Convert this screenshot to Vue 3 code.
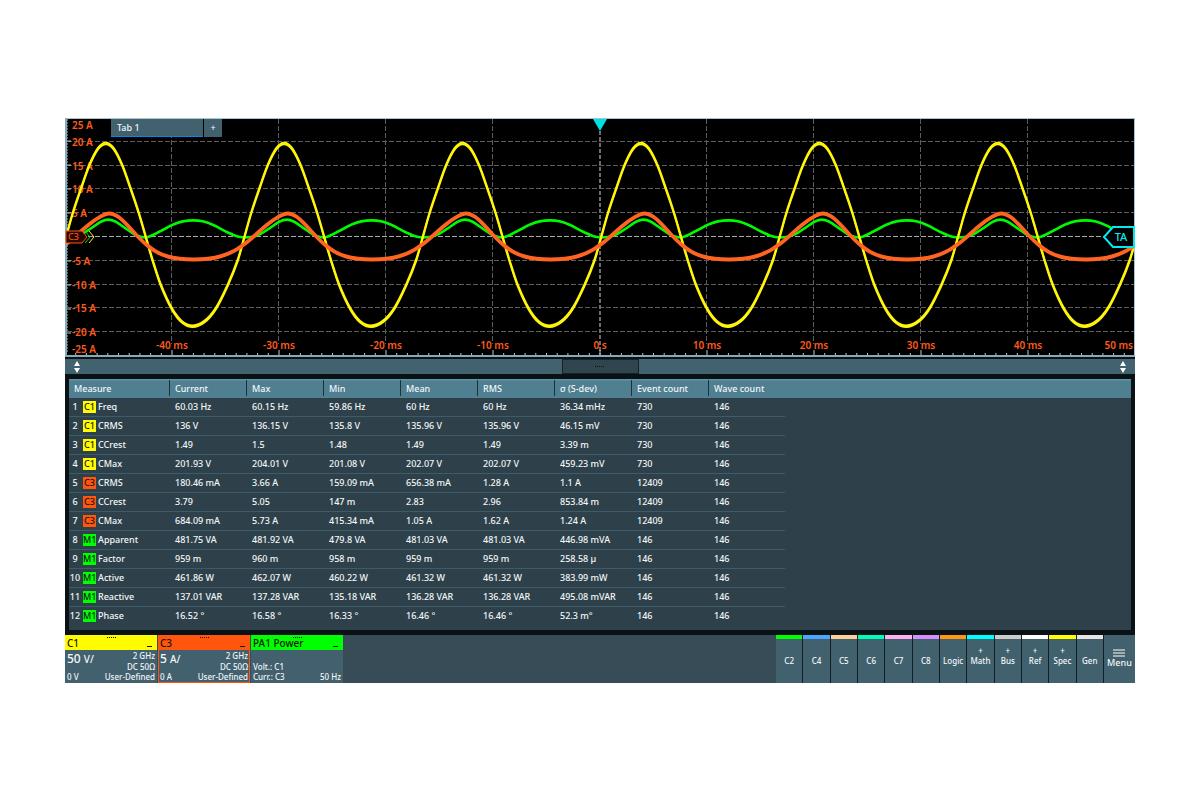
<script setup>
const WIDTH = 1070
const CENTER_X = 535
const CENTER_Y = 119
const PERIOD = 178.4
const DIV_X = 107
const DIV_Y = 23.8

// One cycle of each signal: [offset from the voltage peak, height above zero]
const voltage = [[0, 93.5], [8, 88.2], [16.5, 71.6], [25, 47.8], [33, 24], [40, 0], [47, -24], [55, -48], [66, -71.6], [76, -84.7], [87, -89.3], [98.5, -84.7], [110, -71.6], [122, -48], [132, -23], [138.6, 0], [145.4, 24], [153.4, 47.8], [161.9, 71.6], [170.4, 88.2]]
const current = [[3.5, 23.5], [12.4, 20.2], [22, 11.4], [31.5, 1], [41, -8], [51, -15], [62, -19.5], [74, -21.8], [88, -22.6], [102, -21.8], [115, -19.3], [129, -13.5], [140, -6], [149, 1.5], [161, 12], [172.8, 20.2]]
const power = [[2.5, 17.4], [10, 15.3], [19, 9.2], [28, 3], [35, 0.2], [42, 0], [54, 5.5], [67.5, 12.5], [77, 15.6], [87.5, 16.6], [98, 15.4], [108, 11.8], [121, 5], [133, 0.3], [145, 0], [155, 3.2], [164.4, 9.2], [173.4, 15.3]]

function wave(shape) {
  const pts = []
  for (let c = -4; c < 4; c++) {
    for (const [x, v] of shape) pts.push([CENTER_X + 41 + c * PERIOD + x, CENTER_Y - v])
  }
  let d = `M${pts[1][0].toFixed(1)} ${pts[1][1].toFixed(1)}`
  for (let i = 1; i < pts.length - 2; i++) {
    const [a, b, c, e] = [pts[i - 1], pts[i], pts[i + 1], pts[i + 2]]
    const h = c[0] - b[0]
    const s1 = (c[1] - a[1]) / (c[0] - a[0])
    const s2 = (e[1] - b[1]) / (e[0] - b[0])
    d += `C${[b[0] + h / 3, b[1] + (s1 * h) / 3, c[0] - h / 3, c[1] - (s2 * h) / 3, c[0], c[1]].map((n) => n.toFixed(1)).join(' ')}`
  }
  return d
}

// Each trace is drawn twice with a vertical spread, so flat parts glow thicker than slopes
const traces = [
  { name: 'power', spread: 0.3, d: wave(power) },
  { name: 'voltage', spread: 0.8, d: wave(voltage) },
  { name: 'current', spread: 0.5, d: wave(current) },
]

const rows = [-4, -3, -2, -1, 1, 2, 3, 4].map((n) => Math.round(CENTER_Y + n * DIV_Y))
const cols = [-4, -3, -2, -1, 1, 2, 3, 4].map((n) => CENTER_X + n * DIV_X)
const amps = [25, 20, 15, 10, 5, -5, -10, -15, -20, -25].map((v) => ({
  text: `${v} A`,
  x: 7,
  y: v === 25 ? 11 : v === -25 ? 235 : Math.round(CENTER_Y + 4 - (v / 5) * DIV_Y),
}))
const times = [-40, -30, -20, -10, 0, 10, 20, 30, 40].map((v) => ({
  text: v ? `${v} ms` : '0 s',
  x: CENTER_X + (v / 10) * DIV_X,
}))
const bottomTicks = Array.from({ length: 99 }, (_, i) => ({ x: (i + 1) * 10.7, major: (i + 1) % 10 === 0 }))
const sideTicks = Array.from({ length: 78 }, (_, i) => ({ y: 2 + i * 3, major: i % 8 === 7 }))

const headings = ['Measure', 'Current', 'Max', 'Min', 'Mean', 'RMS', 'σ (S-dev)', 'Event count', 'Wave count']
const measures = [
  ['C1', 'Freq', '60.03 Hz', '60.15 Hz', '59.86 Hz', '60 Hz', '60 Hz', '36.34 mHz', '730', '146'],
  ['C1', 'CRMS', '136 V', '136.15 V', '135.8 V', '135.96 V', '135.96 V', '46.15 mV', '730', '146'],
  ['C1', 'CCrest', '1.49', '1.5', '1.48', '1.49', '1.49', '3.39 m', '730', '146'],
  ['C1', 'CMax', '201.93 V', '204.01 V', '201.08 V', '202.07 V', '202.07 V', '459.23 mV', '730', '146'],
  ['C3', 'CRMS', '180.46 mA', '3.66 A', '159.09 mA', '656.38 mA', '1.28 A', '1.1 A', '12409', '146'],
  ['C3', 'CCrest', '3.79', '5.05', '147 m', '2.83', '2.96', '853.84 m', '12409', '146'],
  ['C3', 'CMax', '684.09 mA', '5.73 A', '415.34 mA', '1.05 A', '1.62 A', '1.24 A', '12409', '146'],
  ['M1', 'Apparent', '481.75 VA', '481.92 VA', '479.8 VA', '481.03 VA', '481.03 VA', '446.98 mVA', '146', '146'],
  ['M1', 'Factor', '959 m', '960 m', '958 m', '959 m', '959 m', '258.58 µ', '146', '146'],
  ['M1', 'Active', '461.86 W', '462.07 W', '460.22 W', '461.32 W', '461.32 W', '383.99 mW', '146', '146'],
  ['M1', 'Reactive', '137.01 VAR', '137.28 VAR', '135.18 VAR', '136.28 VAR', '136.28 VAR', '495.08 mVAR', '146', '146'],
  ['M1', 'Phase', '16.52 °', '16.58 °', '16.33 °', '16.46 °', '16.46 °', '52.3 m°', '146', '146'],
].map(([source, name, ...values]) => ({ source, name, values }))

const channels = [
  { id: 'c1', title: 'C1', scale: '50', unit: 'V/', band: '2 GHz', coupling: 'DC 50Ω', offset: '0 V', probe: 'User-Defined' },
  { id: 'c3', title: 'C3', scale: '5', unit: 'A/', band: '2 GHz', coupling: 'DC 50Ω', offset: '0 A', probe: 'User-Defined' },
]

const sources = [
  { id: 'c2', label: 'C2' },
  { id: 'c4', label: 'C4' },
  { id: 'c5', label: 'C5' },
  { id: 'c6', label: 'C6' },
  { id: 'c7', label: 'C7' },
  { id: 'c8', label: 'C8' },
  { id: 'logic', label: 'Logic' },
  { id: 'math', label: 'Math', add: true },
  { id: 'bus', label: 'Bus', add: true },
  { id: 'ref', label: 'Ref', add: true },
  { id: 'spec', label: 'Spec', add: true },
  { id: 'gen', label: 'Gen' },
]
</script>

<template>
  <main class="scope">
    <section class="plot">
      <svg class="graph" :viewBox="`0 0 ${WIDTH} 239`" role="img" aria-label="Waveforms">
        <rect width="1070" height="239" fill="#000" />
        <g class="grid">
          <path v-for="y in rows" :key="'r' + y" :d="`M2 ${y - 0.5}H1069`" />
          <path v-for="x in cols" :key="'c' + x" :d="`M${x - 0.5} 1V226`" />
        </g>
        <path class="axis" d="M2 118.5H1069" />
        <path class="trigger-line" d="M535 1V237" />

        <g class="labels">
          <text v-for="a in amps" :key="a.text" :x="a.x" :y="a.y">{{ a.text }}</text>
          <text v-for="t in times" :key="t.text" :x="t.x" y="231" text-anchor="middle">{{ t.text }}</text>
          <text x="1068" y="231" text-anchor="end">50 ms</text>
        </g>

        <g v-for="t in traces" :key="t.name" :class="['trace', t.name]">
          <path :d="t.d" :transform="`translate(0 ${-t.spread})`" />
          <path :d="t.d" :transform="`translate(0 ${t.spread})`" />
        </g>

        <g class="ticks">
          <path v-for="t in bottomTicks" :key="t.x" :d="`M${t.x} ${t.major ? 232 : 235}V238`" />
          <path v-for="t in sideTicks" :key="t.y" :d="`M2 ${t.y}H${t.major ? 6 : 3}`" />
        </g>
        <path class="frame" d="M0 0.5H1070M1069.5 0V239" />
        <path class="frame thick" d="M1 0V239M0 238H1070" />

        <path d="M528 1H542L535 13Z" fill="#00dfe4" />
        <g fill="none">
          <path d="M24 113l5 6-5 6" stroke="#ffff28" />
          <path d="M20 113l5 6-5 6" stroke="#19d319" />
          <path d="M1 113H17L22 119L17 125H1Z" fill="#260700" stroke="#ff5412" />
        </g>
        <text class="tag" x="3" y="122">C3</text>
        <path d="M1039 119L1048 109H1069V129H1048Z" fill="#000" stroke="#00ecf2" stroke-width="2" />
        <text class="trigger" x="1056" y="123" text-anchor="middle">TA</text>
      </svg>
      <nav class="tabs">
        <button class="tab">Tab 1</button>
        <button class="add-tab" aria-label="Add tab">+</button>
      </nav>
    </section>

    <div class="divider">
      <button class="step" aria-label="Resize from the left">
        <svg viewBox="0 0 8 12"><path d="M4 0L7 5H1ZM4 12L7 7H1Z" /></svg>
      </button>
      <button class="thumb" aria-label="Drag divider"><i class="grip"></i></button>
      <button class="step" aria-label="Resize from the right">
        <svg viewBox="0 0 8 12"><path d="M4 0L7 5H1ZM4 12L7 7H1Z" /></svg>
      </button>
    </div>

    <section class="results">
      <table>
        <colgroup>
          <col class="name-col" />
          <col v-for="n in 8" :key="n" class="value-col" />
          <col />
        </colgroup>
        <thead>
          <tr>
            <th v-for="h in headings" :key="h" scope="col">{{ h }}</th>
            <td></td>
          </tr>
        </thead>
        <tbody>
          <tr v-for="(m, i) in measures" :key="i">
            <th scope="row">
              <div class="name">
                <span class="index">{{ i + 1 }}</span>
                <span :class="['badge', m.source.toLowerCase()]">{{ m.source }}</span>
                <span>{{ m.name }}</span>
              </div>
            </th>
            <td v-for="(v, j) in m.values" :key="j">{{ v }}</td>
            <td class="rest"></td>
          </tr>
        </tbody>
      </table>
    </section>

    <footer class="dock">
      <article v-for="c in channels" :key="c.id" :class="['channel', c.id]">
        <header>
          <span>{{ c.title }}</span><i class="grip"></i>
          <button class="minimise" :aria-label="`Minimise ${c.title}`"></button>
        </header>
        <div class="body">
          <div class="left">
            <strong>{{ c.scale }} <small>{{ c.unit }}</small></strong>
            <span>{{ c.offset }}</span>
          </div>
          <div class="right">
            <span>{{ c.band }}</span>
            <span>{{ c.coupling }}</span>
            <span>{{ c.probe }}</span>
          </div>
        </div>
      </article>
      <article class="channel pa1">
        <header>
          <span>PA1 Power</span><i class="grip"></i>
          <button class="minimise" aria-label="Minimise PA1 Power"></button>
        </header>
        <div class="body">
          <div class="left end"><span>Volt.: C1</span><span>Curr.: C3</span></div>
          <div class="right end"><span>50 Hz</span></div>
        </div>
      </article>
      <div class="sources">
        <button v-for="s in sources" :key="s.id" :class="['source', s.id]">
          <span v-if="s.add" class="plus">+</span>{{ s.label }}
        </button>
        <button class="menu">
          <svg viewBox="0 0 12 8"><path d="M0 1H12M0 4H12M0 7H12" /></svg>
          Menu
        </button>
      </div>
    </footer>
  </main>
</template>

<style>
body {
  margin: 0;
  background: #fff;
}
</style>

<style scoped>
.scope {
  margin: 118px 65px 0;
  background: #0b1215;
  color: #f2f7f9;
  font: 500 9px/12px 'Noto Sans', 'Open Sans', sans-serif;
}
button {
  margin: 0;
  padding: 0;
  border: 0;
  color: inherit;
  font: inherit;
  background: none;
}
.plot {
  position: relative;
}
.graph {
  display: block;
  width: 100%;
}
.grid path,
.axis,
.trigger-line {
  fill: none;
  stroke: #5c5c5c;
  stroke-dasharray: 5 2;
}
.axis {
  stroke: #a8a8a8;
}
.trigger-line {
  stroke: #6c6c6c;
  stroke-width: 2;
  stroke-dasharray: 4 2;
}
.labels text {
  fill: #ff5a1c;
  font-size: 10px;
  font-weight: 600;
}
.trace {
  fill: none;
  stroke-linejoin: round;
}
.voltage {
  stroke: #fff60a;
  stroke-width: 2;
}
.current {
  stroke: #ff6420;
  stroke-width: 3;
}
.power {
  stroke: #00fa00;
  stroke-width: 2;
}
.ticks path {
  stroke: #b9cdd6;
}
.frame {
  fill: none;
  stroke: #a9c4cf;
}
.thick {
  stroke: #8aa9b6;
  stroke-width: 2;
}
.tag {
  fill: #ff5412;
  font-size: 9px;
}
.trigger {
  fill: #00ecf2;
  font-size: 11px;
}
.tabs {
  position: absolute;
  top: 1px;
  left: 46px;
  display: flex;
  gap: 1px;
}
.tab {
  box-sizing: border-box;
  width: 92px;
  height: 18px;
  padding-left: 6px;
  text-align: left;
  background: #42616e;
  border-bottom: 1px solid #0a84ef;
}
.add-tab {
  width: 18px;
  height: 18px;
  background: #42616e;
}
.divider {
  display: flex;
  align-items: center;
  justify-content: space-between;
  height: 15px;
  margin-top: 2px;
  padding: 0 7px;
  background: #42626f;
}
.step {
  width: 10px;
  height: 12px;
}
.step svg {
  display: block;
  width: 10px;
  height: 12px;
  fill: #fff;
}
.thumb {
  box-sizing: border-box;
  display: flex;
  align-items: center;
  justify-content: center;
  width: 77px;
  height: 15px;
  border: 1px solid #14232a;
  background: #31454f;
}
.grip {
  width: 10px;
  height: 1px;
  background: repeating-linear-gradient(90deg, #0b1216 0 1px, transparent 1px 2px);
}
.results {
  margin: 5px 4px 0;
  padding-bottom: 4px;
  background: #2e414a;
}
table {
  width: 100%;
  table-layout: fixed;
  border-collapse: separate;
  border-spacing: 0;
}
.name-col {
  width: 100px;
}
.value-col {
  width: 77px;
}
th,
td {
  box-sizing: border-box;
  height: 19px;
  padding: 0 0 0 6px;
  text-align: left;
  font-weight: 500;
  white-space: nowrap;
}
thead th,
thead td {
  background: linear-gradient(#5f93a5 0 1px, #4f7f90 2px);
}
thead th {
  position: relative;
}
thead th + th::before {
  content: '';
  position: absolute;
  left: 0;
  top: 1px;
  bottom: 2px;
  width: 1px;
  background: #1d3139;
}
thead th:first-child {
  padding-left: 5px;
}
tbody th,
tbody td {
  border-bottom: 1px solid #3e5c68;
}
tbody th {
  padding: 0;
}
tbody .rest,
tbody tr:last-child > * {
  border-bottom-color: transparent;
}
.name {
  display: flex;
  align-items: center;
  gap: 2px;
}
.index {
  width: 12px;
  text-align: center;
}
.badge {
  width: 13px;
  color: #10181a;
  text-align: center;
}
.c1,
.c3,
.pa1 {
  --tone: #fffb00;
}
.c3 {
  --tone: #ff550d;
}
.pa1 {
  --tone: #00ff00;
}
.badge {
  background: var(--tone, #00ff00);
}
.dock {
  display: flex;
  height: 48px;
  margin-top: 5px;
  background: #374c57;
}
.channel {
  box-sizing: border-box;
  display: flex;
  flex-direction: column;
  width: 92px;
  margin-right: 1px;
  background: #42606d;
}
.channel header {
  position: relative;
  display: flex;
  align-items: center;
  justify-content: space-between;
  height: 15px;
  padding: 0 5px 0 2px;
  background: var(--tone);
  color: #14180c;
  font-size: 10px;
  line-height: 16px;
}
.channel header .grip {
  position: absolute;
  top: 2px;
  left: calc(50% - 4px);
}
.minimise {
  align-self: flex-end;
  width: 5px;
  height: 5px;
  border-bottom: 1px solid #14180c;
  margin-bottom: 3px;
}
.body {
  flex: 1;
  display: flex;
  justify-content: space-between;
  padding: 1px 2px;
  font-size: 8px;
  line-height: 10px;
}
.c3 .body {
  box-shadow: inset 0 -1px var(--tone), inset 1px 0 var(--tone), inset -1px 0 var(--tone);
}
.left,
.right {
  display: flex;
  flex-direction: column;
  justify-content: space-between;
}
.right {
  text-align: right;
}
.end {
  justify-content: flex-end;
}
.body strong {
  font-size: 12px;
  line-height: 15px;
  font-weight: 500;
}
.body small {
  font-size: 10px;
}
.sources {
  flex: 0 0 359px;
  display: flex;
  gap: 1px;
  margin-left: auto;
  background: #131e23;
}
.source {
  flex: 1 1 0;
  display: flex;
  flex-direction: column;
  align-items: center;
  justify-content: center;
  border-top: 4px solid var(--stripe);
  background: #42616e;
  font-size: 8px;
  line-height: 10px;
}
.plus {
  height: 10px;
  margin-top: -10px;
}
.c2 { --stripe: #00ff00; }
.c4 { --stripe: #4ba5ff; }
.c5 { --stripe: #ffd09a; }
.c6 { --stripe: #00ffb4; }
.c7 { --stripe: #ffb0ee; }
.c8 { --stripe: #d48fff; }
.logic { --stripe: #ff9616; }
.math { --stripe: #00ffff; }
.bus { --stripe: #cccccc; }
.ref { --stripe: #ffffff; }
.spec { --stripe: #ffff00; }
.gen { --stripe: #e6e6e6; }
.menu {
  display: flex;
  flex-direction: column;
  align-items: center;
  justify-content: center;
  width: 31px;
  background: #42616e;
  font-size: 9px;
}
.menu svg {
  width: 12px;
  height: 8px;
  stroke: #fff;
  stroke-width: 1;
}
</style>
